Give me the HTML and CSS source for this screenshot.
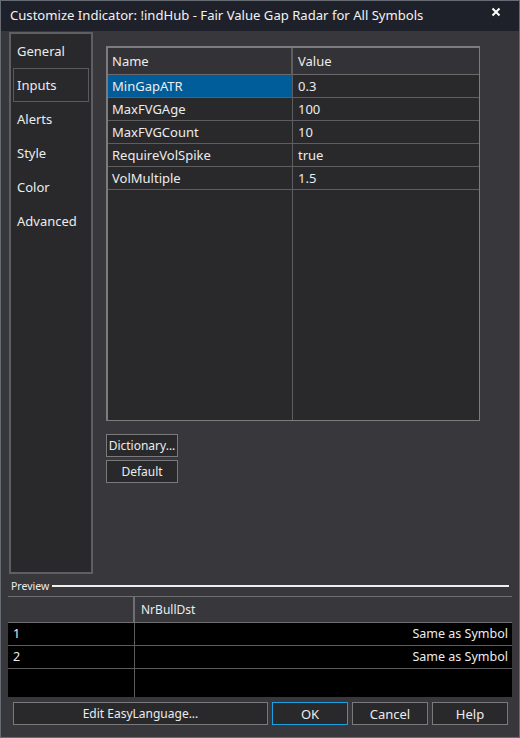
FILE: index.html
```html
<!DOCTYPE html>
<html>
<head>
<meta charset="utf-8">
<link rel="stylesheet" href="styles.css">
</head>
<body>
<div class="window">
  <div class="titlebar">
    <span class="title">Customize Indicator: !indHub - Fair Value Gap Radar for All Symbols</span>
    <svg class="close" width="10" height="10" viewBox="0 0 10 10"><path d="M1.5 1.5 L8.5 8.5 M8.5 1.5 L1.5 8.5" stroke="#ffffff" stroke-width="2"/></svg>
  </div>
  <div class="main">
    <div class="sidebar">
      <div class="tab">General</div>
      <div class="tab selected">Inputs</div>
      <div class="tab">Alerts</div>
      <div class="tab">Style</div>
      <div class="tab">Color</div>
      <div class="tab">Advanced</div>
    </div>
    <div class="content">
      <div class="grid">
        <div class="gh name">Name</div>
        <div class="gh val">Value</div>
        <div class="gc name sel">MinGapATR</div>
        <div class="gc val">0.3</div>
        <div class="gc name">MaxFVGAge</div>
        <div class="gc val">100</div>
        <div class="gc name">MaxFVGCount</div>
        <div class="gc val">10</div>
        <div class="gc name">RequireVolSpike</div>
        <div class="gc val">true</div>
        <div class="gc name">VolMultiple</div>
        <div class="gc val">1.5</div>
        <div class="gf name"></div>
        <div class="gf val"></div>
      </div>
      <div class="sidebtns">
        <div class="btn small">Dictionary...</div>
        <div class="btn small">Default</div>
      </div>
    </div>
  </div>
  <div class="preview-label">
    <span>Preview</span>
    <div class="rule"></div>
  </div>
  <div class="preview">
    <div class="ph c1"></div>
    <div class="ph c2">NrBullDst</div>
    <div class="pc c1">1</div>
    <div class="pc c2 right">Same as Symbol</div>
    <div class="pc c1">2</div>
    <div class="pc c2 right">Same as Symbol</div>
    <div class="pf c1"></div>
    <div class="pf c2"></div>
  </div>
  <div class="footer">
    <div class="btn wide">Edit EasyLanguage...</div>
    <div class="btn ok">OK</div>
    <div class="btn">Cancel</div>
    <div class="btn">Help</div>
  </div>
</div>
</body>
</html>
```
FILE: styles.css
```css
* { box-sizing: border-box; }
html, body {
  margin: 0;
  padding: 0;
  background: #37373c;
}
body {
  font-family: "Noto Sans", "Open Sans", sans-serif;
  font-size: 13px;
  color: #ececec;
}
.window {
  width: 520px;
  height: 738px;
  border: 1px solid #676b74;
  background: #37373c;
  display: flex;
  flex-direction: column;
}
.titlebar {
  height: 30px;
  background: #1f212a;
  display: flex;
  align-items: center;
  justify-content: space-between;
  padding: 0 18px 2px 9px;
  flex: none;
}
.title {
  font-size: 13.1px;
  color: #f2f2f2;
  white-space: nowrap;
}
.close { margin-top: -6px; }
.main {
  display: flex;
  padding: 1px 0 0 8px;
  height: 543px;
  flex: none;
}
.sidebar {
  width: 84px;
  height: 542px;
  border: 2px solid #5f5f62;
  background: #29292c;
  padding: 0;
  display: flex;
  flex-direction: column;
}
.tab {
  height: 34px;
  line-height: 32px;
  padding-left: 5px;
  border: 1px solid transparent;
  font-size: 13px;
}
.selected {
  border-color: #5a5a5d;
  margin: 0 2px;
  padding-left: 3px;
}
.content {
  padding: 14px 0 0 13px;
  display: flex;
  flex-direction: column;
}
.grid {
  width: 374px;
  height: 375px;
  border: 1px solid #7c7c7e;
  border-top: 2px solid #7c7c7e;
  border-left: 2px solid #7c7c7e;
  background: #29292c;
  display: grid;
  grid-template-columns: 185px 1fr;
  grid-template-rows: 27px repeat(5, 23px) 1fr;
}
.gh {
  background: #333337;
  border-bottom: 1px solid #6a6a6c;
  padding-left: 4px;
  line-height: 27px;
}
.gh.name { border-right: 2px solid #5e5e61; }
.gh.val { padding-left: 5px; }
.gc {
  border-bottom: 1px solid #5e5e61;
  padding-left: 4px;
  line-height: 22px;
}
.gc.name, .gf.name { border-right: 1px solid #5e5e61; }
.gc.val { padding-left: 5px; }
.sel { background: #005d99; }
.sidebtns {
  margin-top: 13px;
  display: flex;
  flex-direction: column;
  gap: 3px;
}
.btn {
  height: 23px;
  border: 1px solid #7a7a7c;
  background: #29292c;
  display: flex;
  align-items: center;
  justify-content: center;
  font-size: 13px;
  width: 76px;
  flex: none;
}
.btn.small {
  width: 72px;
  font-size: 12px;
  height: 23px;
}
.preview-label {
  display: flex;
  align-items: center;
  padding: 0 10px 0 10px;
  height: 21px;
  margin-top: 1px;
  flex: none;
}
.preview-label span {
  font-size: 10.5px;
  margin-right: 3px;
}
.rule {
  flex: 1;
  height: 2px;
  background: #f0f0f0;
}
.preview {
  margin: 0 7px 0 7px;
  height: 101px;
  flex: none;
  display: grid;
  grid-template-columns: 127px 1fr;
  grid-template-rows: 26px 23px 23px 1fr;
  border-top: 1px solid #6f6f72;
  background: #000;
}
.ph {
  background: #37373c;
  border-bottom: 1px solid #6f6f72;
  line-height: 25px;
  padding-left: 6px;
  font-size: 12px;
}
.ph.c1 { border-right: 2px solid #6f6f72; }
.pc {
  border-bottom: 1px solid #5c5c5e;
  line-height: 22px;
  padding-left: 5px;
  font-size: 12.5px;
}
.pc.c1, .pf.c1 { border-right: 1px solid #5c5c5e; }
.right { text-align: right; padding-right: 4px; }
.footer {
  display: flex;
  gap: 4px;
  padding: 5px 0 0 12px;
}
.btn.wide { width: 255px; font-size: 12px; }
.btn.ok { border-color: #1ba1e2; }
```
